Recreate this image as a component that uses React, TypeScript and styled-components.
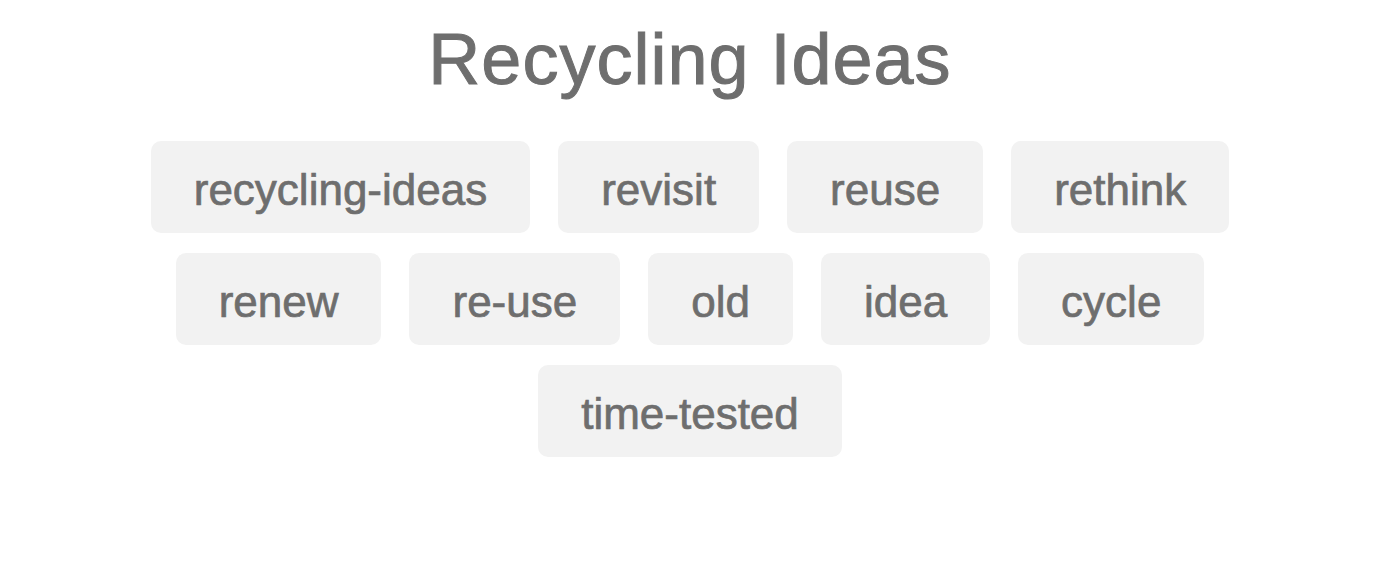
import * as React from 'react';
import styled, { createGlobalStyle } from 'styled-components';

const tags = [
    'recycling-ideas',
    'revisit',
    'reuse',
    'rethink',
    'renew',
    're-use',
    'old',
    'idea',
    'cycle',
    'time-tested',
];

export default function App() {
    return (
        <>
            <GlobalStyle />
            <Page>
                <Title>Recycling Ideas</Title>
                <TagList>
                    {tags.map(tag => (
                        <Tag key={tag}>{tag}</Tag>
                    ))}
                </TagList>
            </Page>
        </>
    );
}


/** styling */

const GlobalStyle = createGlobalStyle`
    html, body {
        margin: 0;
        padding: 0;
        background: #ffffff;
    }

    body {
        font-family: "Liberation Sans", Arial, sans-serif;
        color: #6e6e6e;
    }
`;

const Page = styled.div`
    display: flex;
    flex-direction: column;
    align-items: center;
    width: 1380px;
    padding-top: 18px;
`;

const Title = styled.h1`
    margin: 0 0 40px 0;
    font-size: 72px;
    font-weight: normal;
    line-height: 83px;
    letter-spacing: 1px;
    -webkit-text-stroke: 1px #6e6e6e;
    color: #6e6e6e;
`;

const TagList = styled.div`
    display: flex;
    flex-wrap: wrap;
    justify-content: center;
    gap: 20px 28px;
    width: 1120px;
`;

const Tag = styled.div`
    display: flex;
    align-items: center;
    justify-content: center;
    height: 92px;
    padding: 5px 43px 0;
    box-sizing: border-box;
    background: #f2f2f2;
    border-radius: 10px;
    font-size: 44px;
    line-height: 1;
    color: #6e6e6e;
    -webkit-text-stroke: 0.7px #6e6e6e;
`;
